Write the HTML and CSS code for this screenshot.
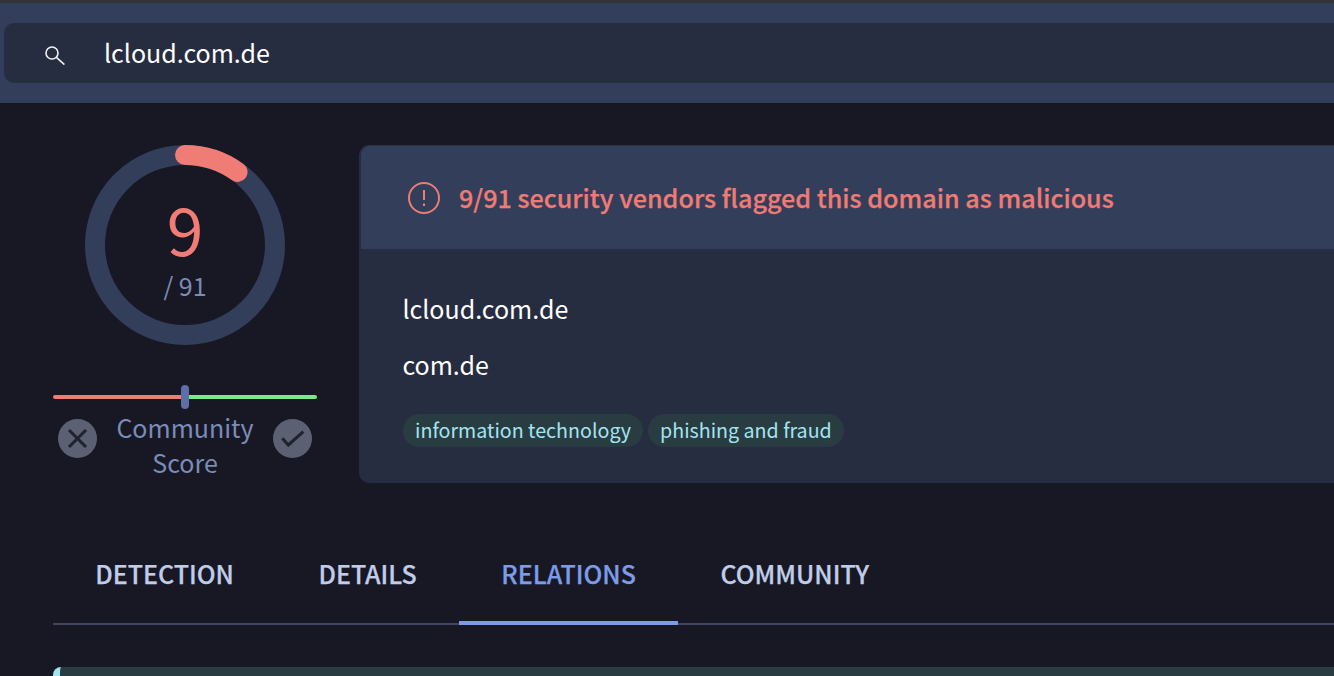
FILE: index.html
```html
<!DOCTYPE html>
<html lang="en">
<head>
<meta charset="utf-8">
<title>lcloud.com.de</title>
<link rel="stylesheet" href="styles.css">
</head>
<body>
<div class="topline"></div>
<header class="header">
  <div class="search">
    <svg class="search-icon" viewBox="0 0 24 24" width="24" height="24" fill="none" stroke="#f1f1f1" stroke-width="1.6"><circle cx="10" cy="12" r="6"/><path d="M14.4 16.4 22.4 23.6"/></svg>
    <span class="search-text">lcloud.com.de</span>
  </div>
</header>
<main class="main">
  <section class="summary">
    <aside class="score">
      <div class="ring">
        <svg class="ring-svg" viewBox="0 0 200 200" width="200" height="200" fill="none" stroke-width="20">
          <circle cx="100" cy="100" r="90" stroke="#323e5a"/>
          <path d="M100 10A90 90 0 0 1 152.6 27" stroke="#f07d75" stroke-linecap="round"/>
        </svg>
        <div class="ring-label">
          <span class="ring-num">9</span>
          <span class="ring-total">/ 91</span>
        </div>
      </div>
      <div class="slider">
        <div class="slider-red"></div>
        <div class="slider-knob"></div>
        <div class="slider-green"></div>
      </div>
      <div class="community">
        <span class="vote">
          <svg viewBox="0 0 39 39" width="39" height="39" fill="none" stroke="#20222f" stroke-width="3.1"><path d="M11 11 28 28M28 11 11 28"/></svg>
        </span>
        <span class="community-label">Community Score</span>
        <span class="vote">
          <svg viewBox="0 0 39 39" width="39" height="39" fill="none" stroke="#20222f" stroke-width="3.1"><path d="M9.3 19.3 15.3 26 30.3 12.7"/></svg>
        </span>
      </div>
    </aside>
    <article class="card">
      <div class="card-head">
        <svg viewBox="0 0 34 34" width="34" height="34" fill="none" stroke="#f07b74" stroke-width="2"><circle cx="17" cy="17" r="15"/><path d="M17 9v10M17 22.4v2.6"/></svg>
        <h1 class="card-title">9/91 security vendors flagged this domain as malicious</h1>
      </div>
      <div class="card-body">
        <div class="line">lcloud.com.de</div>
        <div class="line">com.de</div>
        <div class="tags">
          <span class="tag">information technology</span>
          <span class="tag">phishing and fraud</span>
        </div>
      </div>
    </article>
  </section>
  <nav class="tabs">
    <a class="tab">DETECTION</a>
    <a class="tab">DETAILS</a>
    <a class="tab active">RELATIONS</a>
    <a class="tab">COMMUNITY</a>
  </nav>
  <div class="notice"></div>
</main>
</body>
</html>
```
FILE: styles.css
```css
* { box-sizing: border-box; }
html, body { margin: 0; height: 676px; overflow: hidden; }
body {
  background: #181825;
  color: #fff;
  font-family: "Noto Sans CJK JP", "Noto Sans", sans-serif;
  display: flex;
  flex-direction: column;
}
.topline { height: 3px; background: #333438; flex: none; }
.header { height: 100px; flex: none; background: #323e5a; padding: 20px 0 20px 4px; }
.search {
  height: 60px;
  background: #272d40;
  border-radius: 10px 0 0 10px;
  display: flex;
  align-items: center;
  padding-left: 38px;
  gap: 38px;
}
.search-icon { flex: none; }
.search-text, .line { font-size: 25px; line-height: 36px; }
.search-text { margin-top: -2px; }
.main { padding-left: 53px; flex: 1; min-height: 0; }
.summary { display: flex; gap: 42px; padding-top: 42px; }
.score { width: 264px; flex: none; display: flex; flex-direction: column; align-items: center; }
.ring { width: 200px; height: 200px; position: relative; }
.ring-svg { display: block; }
.ring-label {
  position: absolute; inset: 0;
  display: flex; flex-direction: column; align-items: center; justify-content: center;
}
.ring-num { font-size: 66px; line-height: 60px; color: #f07d75; margin-top: 6px; }
.ring-total { font-size: 25px; line-height: 30px; color: #7a8cb8; margin-top: 13px; }
.slider { width: 100%; height: 24px; margin-top: 40px; display: flex; align-items: center; }
.slider-red { flex: 1; height: 4px; background: #f07d75; border-radius: 2px 0 0 2px; }
.slider-green { flex: 1; height: 4px; background: #7fe58f; border-radius: 0 2px 2px 0; }
.slider-knob { width: 8px; height: 24px; background: #5d6fa6; border-radius: 4px; }
.community { width: 100%; display: flex; align-items: flex-start; padding: 0 5px; }
.vote {
  flex: none; width: 39px; height: 39px; border-radius: 50%;
  background: #5b6173; margin-top: 10px;
}
.vote svg { display: block; }
.community-label {
  flex: 1; text-align: center;
  font-size: 25px; line-height: 35px; color: #7a8cb8;
  padding: 1px 12px 0;
}
.card {
  flex: 1; height: 338px;
  background: #272d40;
  border-radius: 10px 0 0 10px;
  overflow: hidden;
  border-top: 1px solid #2c3349;
  border-left: 2px solid #272d40;
}
.card-head {
  height: 103px;
  background: #323e5a;
  display: flex;
  align-items: center;
  padding-left: 46px;
  gap: 18px;
}
.card-title {
  margin: -1px 0 0;
  font-size: 25.15px; font-weight: 500; color: #f07b74; line-height: 36px;
  -webkit-text-stroke: 0.25px #f07b74;
}
.card-body { padding: 41px 0 0 42px; }
.line { margin: 0 0 20px -0.6px; }
.tags { display: flex; gap: 5px; margin-top: 32px; }
.tag {
  height: 33px; line-height: 32px;
  padding: 0 12px;
  border-radius: 17px;
  font-size: 19.65px;
  background: #283c42;
  color: #a4e4f0;
}
.tabs { display: flex; margin-top: 71px; border-bottom: 2px solid #3f4662; height: 71px; }
.tab {
  font-size: 25px; font-weight: 500; color: #c0cde8;
  padding: 0 42.25px; height: 71px; line-height: 38px;
  -webkit-text-stroke: 0.25px;
}
.tab.active { color: #7d9ce8; border-bottom: 4px solid #7d9ce8; }
.notice {
  height: 30px; margin-top: 42px;
  background: #283c42;
  border-left: 7px solid #a4e4f0;
  border-top-left-radius: 8px;
}
```
